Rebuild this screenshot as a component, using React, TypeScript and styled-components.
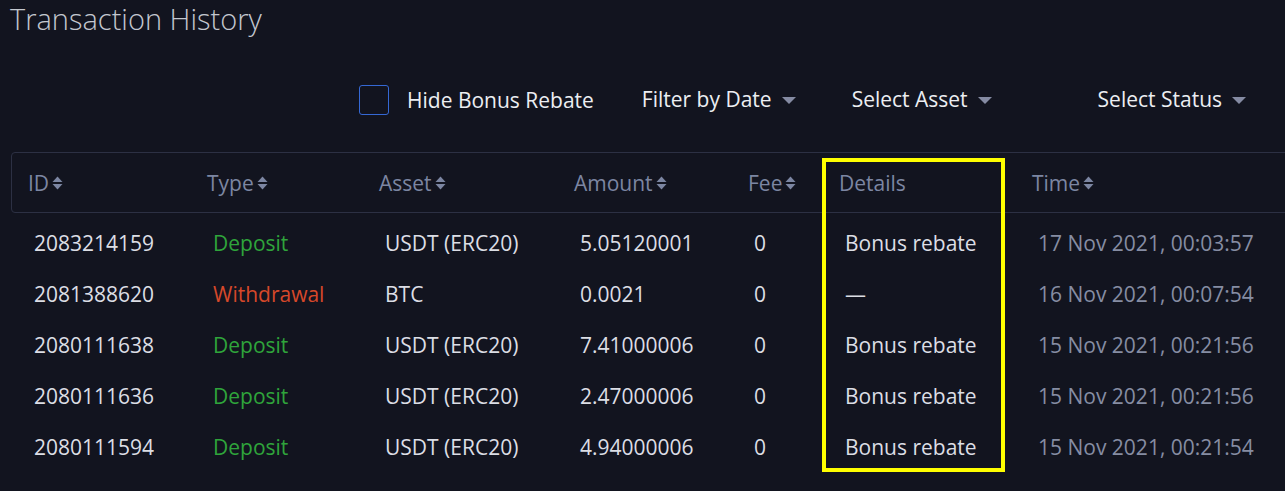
import React from "react";
import styled, { createGlobalStyle } from "styled-components";

const GlobalStyle = createGlobalStyle`
  html, body {
    margin: 0;
    padding: 0;
    background: #12141f;
    overflow: hidden;
  }
  body {
    font-family: "Open Sans", "Noto Sans", sans-serif;
    color: #dcdee5;
  }
`;

const Page = styled.div`
  position: relative;
  width: 1285px;
  height: 491px;
  padding-left: 11px;
  box-sizing: border-box;
`;

const Title = styled.h1`
  margin: 0 0 0 -1px;
  font-size: 29px;
  font-weight: 300;
  line-height: 38px;
  color: #c3c7cf;
`;

const Filters = styled.div`
  display: flex;
  align-items: center;
  height: 50px;
  margin-top: 37px;
  padding-left: 348px;
`;

const CheckLabel = styled.label`
  display: flex;
  align-items: center;
  gap: 18px;
  font-size: 21px;
  color: #eceef2;
  cursor: pointer;
`;

const CheckBox = styled.span`
  width: 28px;
  height: 28px;
  border: 1px solid #3568d4;
  border-radius: 3px;
`;

const Dropdown = styled.button<{ $gap: number }>`
  display: flex;
  align-items: center;
  gap: 10px;
  margin-left: ${p => p.$gap}px;
  margin-top: -2px;
  padding: 0;
  border: none;
  background: none;
  font-family: inherit;
  font-size: 21px;
  color: #eceef2;
`;

const Caret = styled.span`
  width: 0;
  height: 0;
  border-left: 7px solid transparent;
  border-right: 7px solid transparent;
  border-top: 7px solid #858ba3;
  margin-top: 3px;
`;

const TableWrap = styled.div`
  width: 1300px;
  margin-top: 27px;
`;

const cols = "179px 172px 195px 174px 91px 193px 1fr";

const HeadRow = styled.div`
  display: grid;
  grid-template-columns: ${cols};
  align-items: center;
  height: 59px;
  padding-left: 16px;
  border: 1px solid #2c3043;
  border-radius: 4px;
`;

const HeadCell = styled.div`
  display: flex;
  align-items: center;
  gap: 3px;
  font-size: 21px;
  color: #7c86a2;
`;

const SortIcon = () => (
  <svg width="11" height="14" viewBox="0 0 11 14">
    <path d="M5.5 0.5 L10.5 6 L0.5 6 Z" fill="#7c86a2" />
    <path d="M0.5 8 L10.5 8 L5.5 13.5 Z" fill="#7c86a2" />
  </svg>
);

const Body = styled.div`
  margin-top: 4px;
`;

const Row = styled.div`
  display: grid;
  grid-template-columns: ${cols};
  align-items: center;
  height: 51px;
  padding-left: 23px;
`;

const Cell = styled.div<{ $tone?: "in" | "out" | "muted" }>`
  font-size: 21px;
  color: ${p =>
    p.$tone === "in"
      ? "#2fa43b"
      : p.$tone === "out"
      ? "#d6482a"
      : p.$tone === "muted"
      ? "#868da3"
      : "#dcdee5"};
  white-space: nowrap;
`;

const Highlight = styled.div`
  position: absolute;
  left: 822px;
  top: 158px;
  width: 183px;
  height: 314px;
  border: 4px solid #ffff00;
  box-sizing: border-box;
  pointer-events: none;
`;

type Tx = {
  id: string;
  type: "Deposit" | "Withdrawal";
  asset: string;
  amount: string;
  fee: string;
  details: string;
  time: string;
};

const rows: Tx[] = [
  { id: "2083214159", type: "Deposit", asset: "USDT (ERC20)", amount: "5.05120001", fee: "0", details: "Bonus rebate", time: "17 Nov 2021, 00:03:57" },
  { id: "2081388620", type: "Withdrawal", asset: "BTC", amount: "0.0021", fee: "0", details: "—", time: "16 Nov 2021, 00:07:54" },
  { id: "2080111638", type: "Deposit", asset: "USDT (ERC20)", amount: "7.41000006", fee: "0", details: "Bonus rebate", time: "15 Nov 2021, 00:21:56" },
  { id: "2080111636", type: "Deposit", asset: "USDT (ERC20)", amount: "2.47000006", fee: "0", details: "Bonus rebate", time: "15 Nov 2021, 00:21:56" },
  { id: "2080111594", type: "Deposit", asset: "USDT (ERC20)", amount: "4.94000006", fee: "0", details: "Bonus rebate", time: "15 Nov 2021, 00:21:54" },
];

const headers: { label: string; sortable: boolean }[] = [
  { label: "ID", sortable: true },
  { label: "Type", sortable: true },
  { label: "Asset", sortable: true },
  { label: "Amount", sortable: true },
  { label: "Fee", sortable: true },
  { label: "Details", sortable: false },
  { label: "Time", sortable: true },
];

export default function App() {
  return (
    <Page>
      <GlobalStyle />
      <Title>Transaction History</Title>
      <Filters>
        <CheckLabel>
          <CheckBox />
          Hide Bonus Rebate
        </CheckLabel>
        <Dropdown $gap={48}>
          Filter by Date <Caret />
        </Dropdown>
        <Dropdown $gap={56}>
          Select Asset <Caret />
        </Dropdown>
        <Dropdown $gap={106}>
          Select Status <Caret />
        </Dropdown>
      </Filters>
      <TableWrap>
        <HeadRow>
          {headers.map(h => (
            <HeadCell key={h.label}>
              {h.label}
              {h.sortable && <SortIcon />}
            </HeadCell>
          ))}
        </HeadRow>
        <Body>
          {rows.map(r => (
            <Row key={r.id}>
              <Cell>{r.id}</Cell>
              <Cell $tone={r.type === "Deposit" ? "in" : "out"}>{r.type}</Cell>
              <Cell>{r.asset}</Cell>
              <Cell>{r.amount}</Cell>
              <Cell>{r.fee}</Cell>
              <Cell>{r.details}</Cell>
              <Cell $tone="muted">{r.time}</Cell>
            </Row>
          ))}
        </Body>
      </TableWrap>
      <Highlight />
    </Page>
  );
}
